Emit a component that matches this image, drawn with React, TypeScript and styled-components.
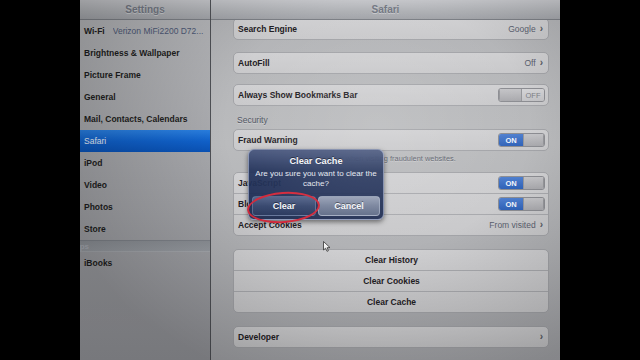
import React from 'react'
import styled, { createGlobalStyle } from 'styled-components'

const MainFont = '"Liberation Sans", Arial, sans-serif'

const GlobalStyle = createGlobalStyle`
  html, body {
    margin: 0;
    padding: 0;
    background: #000;
    font-family: ${MainFont};
  }
`

const leftItems = [
  'Brightness & Wallpaper',
  'Picture Frame',
  'General',
  'Mail, Contacts, Calendars',
  'Safari',
  'iPod',
  'Video',
  'Photos',
  'Store'
]

const Chevron = () => <Arrow>›</Arrow>

const Toggle = (props: { on?: boolean }) => (
  <Switch>
    {props.on ? (
      <>
        <SwitchLabel $on>ON</SwitchLabel>
        <Knob $w={19} />
      </>
    ) : (
      <>
        <Knob $w={21} />
        <SwitchLabel>OFF</SwitchLabel>
      </>
    )}
  </Switch>
)

export default function App() {
  return (
    <Frame>
      <GlobalStyle />
      <Screen>
        <LeftPane>
          <Header>
            <HeaderTitle>Settings</HeaderTitle>
          </Header>
          <MenuRow>
            Wi-Fi
            <MenuDetail>Verizon MiFi2200 D72...</MenuDetail>
          </MenuRow>
          {leftItems.map(item => (
            <MenuRow key={item} $selected={item === 'Safari'}>
              {item}
            </MenuRow>
          ))}
          <MenuSection>Apps</MenuSection>
          <MenuRow>iBooks</MenuRow>
        </LeftPane>

        <RightPane>
          <Header>
            <HeaderTitle>Safari</HeaderTitle>
          </Header>
          <Content>
            <Group $top={-2}>
              <Row>
                <RowLabel>Search Engine</RowLabel>
                <RowValue>Google<Chevron /></RowValue>
              </Row>
            </Group>
            <Group $top={12}>
              <Row>
                <RowLabel>AutoFill</RowLabel>
                <RowValue>Off<Chevron /></RowValue>
              </Row>
            </Group>
            <Group $top={10}>
              <Row>
                <RowLabel>Always Show Bookmarks Bar</RowLabel>
                <Toggle />
              </Row>
            </Group>
            <SectionLabel>Security</SectionLabel>
            <Group>
              <Row>
                <RowLabel>Fraud Warning</RowLabel>
                <Toggle on />
              </Row>
            </Group>
            <FooterNote>Warn when visiting fraudulent websites.</FooterNote>
            <Group>
              <Row>
                <RowLabel>JavaScript</RowLabel>
                <Toggle on />
              </Row>
              <Row>
                <RowLabel>Block Pop-ups</RowLabel>
                <Toggle on />
              </Row>
              <Row>
                <RowLabel>Accept Cookies</RowLabel>
                <RowValue>From visited<Chevron /></RowValue>
              </Row>
            </Group>
            <Group $top={13}>
              <Row $center>Clear History</Row>
              <Row $center>Clear Cookies</Row>
              <Row $center>Clear Cache</Row>
            </Group>
            <Group $top={13}>
              <Row>
                <RowLabel>Developer</RowLabel>
                <RowValue><Chevron /></RowValue>
              </Row>
            </Group>
          </Content>
        </RightPane>

        <Alert>
          <AlertTitle>Clear Cache</AlertTitle>
          <AlertText>Are you sure you want to clear the cache?</AlertText>
          <AlertButtons>
            <AlertButton $dark>Clear</AlertButton>
            <AlertButton>Cancel</AlertButton>
          </AlertButtons>
        </Alert>
        <RedCircle />
        <Cursor width="8" height="11" viewBox="0 0 8 11">
          <path d="M0.5 0.5 L0.5 9 L2.6 7.2 L4 10.3 L5.4 9.7 L4.1 6.7 L7 6.6 Z" fill="#f4f4f4" stroke="#333" strokeWidth="0.8" />
        </Cursor>
        <Vignette />
      </Screen>
    </Frame>
  )
}

const Frame = styled.div`
  width: 640px;
  height: 360px;
  background: #000;
  display: flex;
  justify-content: center;
  overflow: hidden;
`

const Screen = styled.div`
  position: relative;
  width: 480px;
  height: 360px;
  overflow: hidden;
  display: grid;
  grid-template-columns: 131px 1fr;
`

const LeftPane = styled.div`
  display: flex;
  flex-direction: column;
  background: linear-gradient(180deg, #b6b7ba 0%, #a4a5a9 50%, #95969b 100%);
  border-right: 1px solid #4e5055;
  overflow: hidden;
`

const RightPane = styled.div`
  display: flex;
  flex-direction: column;
  background: linear-gradient(180deg, #b2b3b6 0%, #babbbd 40%, #a7a8ac 100%);
  overflow: hidden;
`

const Header = styled.div`
  position: relative;
  z-index: 1;
  height: 19px;
  flex-shrink: 0;
  display: flex;
  align-items: center;
  justify-content: center;
  background: linear-gradient(180deg, #c6c7cb 0%, #b1b3b7 55%, #a2a4a9 100%);
  border-bottom: 1px solid #7c7f85;
`

const HeaderTitle = styled.span`
  font-size: 10px;
  font-weight: bold;
  color: #737883;
  text-shadow: 0 1px 0 rgba(255, 255, 255, 0.35);
`

const MenuRow = styled.div<{ $selected?: boolean }>`
  height: 22px;
  flex-shrink: 0;
  display: flex;
  align-items: center;
  padding-left: 4px;
  font-size: 8.5px;
  font-weight: ${p => (p.$selected ? 'normal' : 'bold')};
  color: ${p => (p.$selected ? '#e8eefa' : '#1d1d20')};
  white-space: nowrap;
  background: ${p => (p.$selected ? 'linear-gradient(180deg, #2a7fe0 0%, #1062cc 50%, #0a52b6 100%)' : 'transparent')};
`

const MenuDetail = styled.span`
  margin-left: 8px;
  font-weight: normal;
  color: #4d5875;
  overflow: hidden;
  text-overflow: ellipsis;
  padding-right: 4px;
`

const MenuSection = styled.div`
  height: 10px;
  flex-shrink: 0;
  display: flex;
  align-items: center;
  text-indent: -11px;
  font-size: 8px;
  font-weight: bold;
  color: #a9adb5;
  background: linear-gradient(180deg, #8d9197 0%, #979ba1 100%);
  border-top: 1px solid #7f838a;
  border-bottom: 1px solid #a5a8ad;
  overflow: hidden;
`

const Content = styled.div`
  display: flex;
  flex-direction: column;
  padding: 0 11px 0 22px;
`

const Group = styled.div<{ $top?: number }>`
  margin-top: ${p => p.$top || 0}px;
  border: 1px solid #a3a4a8;
  border-radius: 5px;
  background: linear-gradient(180deg, #d0d0d2 0%, #c9c9cb 100%);
  overflow: hidden;
  & > div + div {
    border-top: 1px solid #a9aaae;
  }
`

const Row = styled.div<{ $center?: boolean }>`
  height: 20px;
  display: flex;
  align-items: center;
  justify-content: ${p => (p.$center ? 'center' : 'space-between')};
  padding: 0 3px 0 4px;
  font-size: 8.5px;
  font-weight: ${p => (p.$center ? 'bold' : 'normal')};
  color: #1f2024;
  white-space: nowrap;
`

const RowLabel = styled.span`
  font-weight: bold;
  color: #1f2024;
`

const RowValue = styled.span`
  display: flex;
  align-items: center;
  color: #5a5f6e;
  padding-right: 2px;
`

const Arrow = styled.span`
  margin-left: 4px;
  font-size: 10px;
  font-weight: bold;
  color: #55595f;
  line-height: 1;
`

const SectionLabel = styled.div`
  height: 23px;
  display: flex;
  align-items: flex-end;
  padding: 0 0 4px 4px;
  box-sizing: border-box;
  font-size: 8.5px;
  color: #4f5461;
  text-shadow: 0 1px 0 rgba(255, 255, 255, 0.3);
`

const FooterNote = styled.div`
  height: 21px;
  padding-top: 3px;
  box-sizing: border-box;
  text-align: center;
  font-size: 7.4px;
  line-height: 10px;
  color: #60646f;
  text-shadow: 0 1px 0 rgba(255, 255, 255, 0.3);
`

const Switch = styled.div`
  width: 47px;
  height: 14px;
  display: flex;
  border: 1px solid #8c8d92;
  border-radius: 3px;
  overflow: hidden;
  box-sizing: border-box;
`

const SwitchLabel = styled.span<{ $on?: boolean }>`
  flex: 1;
  display: flex;
  align-items: center;
  justify-content: center;
  font-size: 7.5px;
  font-weight: ${p => (p.$on ? 'bold' : 'normal')};
  color: ${p => (p.$on ? '#f2f5fb' : '#7d7f85')};
  background: ${p => (p.$on ? 'linear-gradient(180deg, #4f7fcf 0%, #2f62b8 100%)' : 'linear-gradient(180deg, #d5d5d7 0%, #c3c3c6 100%)')};
`

const Knob = styled.span<{ $w: number }>`
  width: ${p => p.$w}px;
  background: linear-gradient(180deg, #c4c4c7 0%, #a9a9ad 100%);
  border-left: 1px solid #96979b;
  border-right: 1px solid #96979b;
`

const Alert = styled.div`
  position: absolute;
  left: 168px;
  top: 149px;
  width: 136px;
  height: 71px;
  box-sizing: border-box;
  padding: 6px 3px 3px;
  display: flex;
  flex-direction: column;
  align-items: center;
  border: 1px solid rgba(200, 210, 235, 0.55);
  border-radius: 6px;
  background: linear-gradient(180deg, rgba(70, 85, 125, 0.95) 0%, rgba(34, 50, 90, 0.94) 30%, rgba(28, 42, 80, 0.94) 100%);
  box-shadow: 0 2px 5px rgba(0, 0, 0, 0.5);
  z-index: 2;
`

const AlertTitle = styled.div`
  font-size: 9.2px;
  font-weight: bold;
  color: #f4f6fa;
  text-shadow: 0 -1px 0 rgba(0, 0, 0, 0.5);
`

const AlertText = styled.div`
  margin-top: 3px;
  width: 124px;
  text-align: center;
  font-size: 8px;
  line-height: 10px;
  color: #e4e8f0;
`

const AlertButtons = styled.div`
  margin-top: auto;
  width: 100%;
  display: grid;
  grid-template-columns: 64px 62px;
  justify-content: space-between;
`

const AlertButton = styled.div<{ $dark?: boolean }>`
  height: 20px;
  display: flex;
  align-items: center;
  justify-content: center;
  border-radius: 4px;
  border: 1px solid ${p => (p.$dark ? 'rgba(120, 135, 170, 0.6)' : 'rgba(170, 180, 200, 0.7)')};
  box-sizing: border-box;
  font-size: 9px;
  font-weight: bold;
  color: #f6f7fa;
  text-shadow: 0 -1px 0 rgba(0, 0, 0, 0.45);
  background: ${p => (p.$dark
    ? 'linear-gradient(180deg, #56668c 0%, #3a4a70 50%, #2c3b60 100%)'
    : 'linear-gradient(180deg, #98a1b6 0%, #78839c 50%, #626e89 100%)')};
`

const RedCircle = styled.div`
  position: absolute;
  left: 167px;
  top: 192px;
  width: 73px;
  height: 31px;
  box-sizing: border-box;
  border: 2px solid #d42a3c;
  border-radius: 50%;
  transform: rotate(-4deg);
  z-index: 3;
`

const Cursor = styled.svg`
  position: absolute;
  left: 243px;
  top: 241px;
  z-index: 3;
`

const Vignette = styled.div`
  position: absolute;
  inset: 0;
  pointer-events: none;
  z-index: 4;
  background: radial-gradient(ellipse 70% 75% at 62% 35%, rgba(255, 255, 255, 0.12) 0%, rgba(255, 255, 255, 0) 45%, rgba(0, 0, 0, 0.2) 100%);
`
